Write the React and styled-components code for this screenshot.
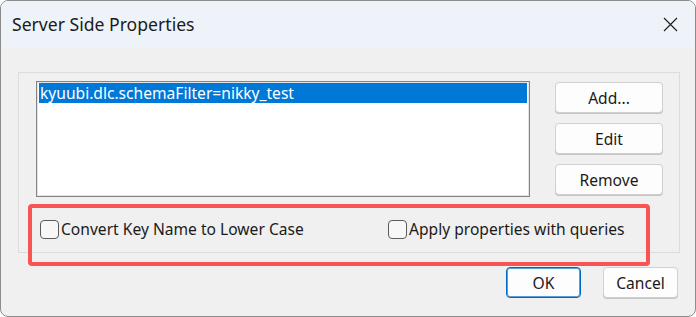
import React from 'react';
import styled, { createGlobalStyle } from 'styled-components';

const GlobalStyle = createGlobalStyle`
  html, body {
    margin: 0;
    padding: 0;
    background: #ffffff;
  }
  * {
    box-sizing: border-box;
  }
`;

const Window = styled.div`
  width: 696px;
  height: 317px;
  border: 1px solid #8c8c8c;
  border-radius: 8px;
  overflow: hidden;
  display: flex;
  flex-direction: column;
  background: #f0f0f0;
  font-family: 'Noto Sans', 'Open Sans', sans-serif;
  color: #1a1a1a;
`;

const TitleBar = styled.div`
  height: 46px;
  flex: none;
  display: flex;
  align-items: center;
  justify-content: space-between;
  padding: 0 0 0 11px;
  background: #eef2f9;
`;

const Title = styled.span`
  font-size: 17.6px;
  font-weight: 400;
  color: #1b1b1b;
  margin-top: -1px;
`;

const CloseButton = styled.div`
  width: 46px;
  height: 46px;
  display: flex;
  align-items: center;
  justify-content: center;
  margin-right: 2px;
`;

const Body = styled.div`
  flex: 1;
  display: flex;
  flex-direction: column;
  padding: 25px 15px 0 17px;
`;

const GroupBox = styled.div`
  height: 181px;
  border: 1px solid #dcdcdc;
  display: flex;
  flex-direction: column;
  padding: 8px 0 0 17px;
`;

const ListRow = styled.div`
  display: flex;
  gap: 25px;
`;

const ListBox = styled.div`
  width: 494px;
  height: 116px;
  background: #ffffff;
  border: 1px solid #838383;
  box-shadow: inset 0 0 0 1px #e3e3e3;
  padding: 1px 2px;
`;

const ListItem = styled.div`
  height: 20px;
  line-height: 20px;
  font-size: 15.6px;
  padding-left: 1px;
  background: ${props => (props.selected ? '#0078d7' : 'transparent')};
  color: ${props => (props.selected ? '#ffffff' : '#1a1a1a')};
  white-space: nowrap;
`;

const ButtonColumn = styled.div`
  display: flex;
  flex-direction: column;
  gap: 10px;
  padding-top: 1px;
`;

const Button = styled.div`
  width: ${props => props.width || 108}px;
  height: 31px;
  display: flex;
  align-items: center;
  justify-content: center;
  background: #fdfdfd;
  border: 1px solid ${props => (props.primary ? '#0067c0' : '#d0d0d0')};
  box-shadow: ${props =>
    props.primary ? 'inset 0 0 0 1px #5a9fdc' : '0 1px 0 #c4c4c4'};
  border-radius: 4px;
  font-size: 15.6px;
  color: #1a1a1a;
`;

const OptionsRow = styled.div`
  position: relative;
  display: flex;
  align-items: center;
  height: 20px;
  margin-top: 22px;
  padding-left: 4px;

  &::after {
    content: '';
    position: absolute;
    left: -8px;
    top: -15px;
    width: 614px;
    height: 54px;
    border: 4px solid #f95454;
    border-radius: 4px;
  }
`;

const Option = styled.label`
  display: flex;
  align-items: center;
  gap: 2px;
  font-size: 15.6px;
  color: #1a1a1a;
  width: ${props => props.width}px;
`;

const Box = styled.span`
  width: 19px;
  height: 19px;
  border: 1px solid #5c5c5c;
  border-radius: 4px;
  background: #f7f7f7;
  flex: none;
`;

const Footer = styled.div`
  display: flex;
  justify-content: flex-end;
  gap: 22px;
  padding-top: 14px;
  padding-right: 2px;
`;

export default function App() {
  return (
    <>
      <GlobalStyle />
      <Window>
        <TitleBar>
          <Title>Server Side Properties</Title>
          <CloseButton>
            <svg width="15" height="15" viewBox="0 0 15 15">
              <path d="M1 1 L14 14 M14 1 L1 14" stroke="#1b1b1b" strokeWidth="1.1" fill="none" />
            </svg>
          </CloseButton>
        </TitleBar>
        <Body>
          <GroupBox>
            <ListRow>
              <ListBox>
                <ListItem selected>kyuubi.dlc.schemaFilter=nikky_test</ListItem>
              </ListBox>
              <ButtonColumn>
                <Button>Add...</Button>
                <Button>Edit</Button>
                <Button>Remove</Button>
              </ButtonColumn>
            </ListRow>
            <OptionsRow>
              <Option width={348}>
                <Box />
                Convert Key Name to Lower Case
              </Option>
              <Option width={250}>
                <Box />
                Apply properties with queries
              </Option>
            </OptionsRow>
          </GroupBox>
          <Footer>
            <Button width={75} primary>OK</Button>
            <Button width={75}>Cancel</Button>
          </Footer>
        </Body>
      </Window>
    </>
  );
}
